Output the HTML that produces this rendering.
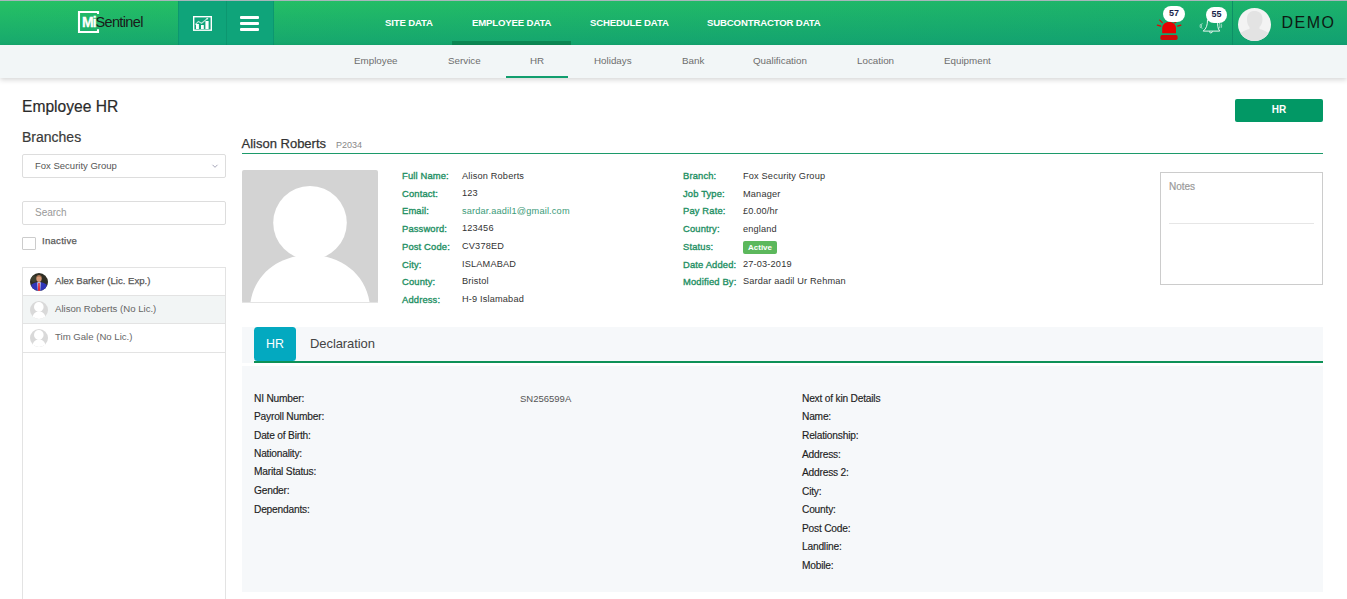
<!DOCTYPE html>
<html><head><meta charset="utf-8">
<style>
*{box-sizing:border-box;margin:0;padding:0}
html,body{width:1347px;height:599px;overflow:hidden;background:#fff;font-family:"Liberation Sans",sans-serif;color:#333}
.a{position:absolute;white-space:nowrap}
#top{position:absolute;left:0;top:0;width:1347px;height:1px;background:#a8b6bb}
#hdr{position:absolute;left:0;top:1px;width:1347px;height:44px;background:linear-gradient(to bottom,rgba(2,134,122,0) 0%,rgba(2,134,122,0.42) 100%),linear-gradient(to right,#26c164,#1cb26b)}
#blk{position:absolute;left:178px;top:1px;width:96px;height:44px;background:#0fa47a}
#blk .d1{position:absolute;left:48px;top:0;width:1px;height:44px;background:#0c9770}
#blk .d0{position:absolute;left:0;top:0;width:1px;height:44px;background:#0c9770}
#blk .d2{position:absolute;left:95px;top:0;width:1px;height:44px;background:#0c9770}
.nav{position:absolute;top:16.9px;font-size:9.6px;font-weight:bold;color:#fff;letter-spacing:-0.15px}
#navul{position:absolute;left:452px;top:41px;width:119px;height:4px;background:#0c8753}
#sub{position:absolute;left:0;top:45px;width:1347px;height:33px;background:#f2f6f7;box-shadow:0 2px 5px rgba(0,0,0,0.16)}
.sn{position:absolute;top:54.6px;font-size:9.8px;color:#6e6e6e}
#subul{position:absolute;left:506px;top:76px;width:62px;height:2px;background:#119e6e}
.dl{position:absolute;white-space:nowrap;font-size:9.4px;line-height:1;color:#1f9064;-webkit-text-stroke:0.35px #1f9064;letter-spacing:0.15px;margin-top:0.7px}
.dv{position:absolute;white-space:nowrap;font-size:9.2px;line-height:1;color:#333;letter-spacing:0.17px;margin-top:1.5px}
.em{color:#3a9a78}
.hl{position:absolute;white-space:nowrap;font-size:10.2px;letter-spacing:-0.2px;line-height:1;color:#1e1e1e;margin-top:0.4px;-webkit-text-stroke:0.15px #1e1e1e}
</style></head><body>
<div id="top"></div>
<div id="hdr"></div>
<div id="blk"><div class="d0"></div><div class="d1"></div><div class="d2"></div></div>
<!-- logo -->
<svg class="a" style="left:76px;top:9px" width="30" height="27" viewBox="0 0 30 27">
  <path d="M22 5 V3 H3 V23 H22 V20.3" fill="none" stroke="#fff" stroke-width="2.1"/>
</svg>
<div class="a" style="left:82px;top:14px;font-size:14px;font-weight:bold;color:#fff;letter-spacing:-0.8px;-webkit-text-stroke:0.3px #fff">Mi</div>
<div class="a" style="left:95.5px;top:14px;font-size:14.5px;color:#1a1a1a;letter-spacing:-0.65px">Sentinel</div>
<!-- chart icon -->
<svg class="a" style="left:192px;top:15px" width="22" height="18" viewBox="0 0 22 18">
  <rect x="1.7" y="1.7" width="17.6" height="13.5" fill="none" stroke="#fff" stroke-width="1.4"/>
  <path d="M4 14 V8.9 H6.9 V14 Z M9 14 V10.1 H11.8 V14 Z M13.4 14 V6.1 H16.6 V14 Z" fill="#fff"/>
  <path d="M3.3 9.6 L6.4 6.4 L9.6 8.2 L15.2 3.6" fill="none" stroke="#fff" stroke-opacity="0.7" stroke-width="1.2"/>
  <circle cx="15.3" cy="3.6" r="0.9" fill="#fff" fill-opacity="0.8"/>
</svg>
<!-- hamburger -->
<div class="a" style="left:240px;top:16px;width:19px;height:3px;background:#fff;border-radius:1px"></div>
<div class="a" style="left:240px;top:22px;width:19px;height:3px;background:#fff;border-radius:1px"></div>
<div class="a" style="left:240px;top:28px;width:19px;height:3px;background:#fff;border-radius:1px"></div>

<div class="nav" style="left:385px">SITE DATA</div>
<div class="nav" style="left:472px">EMPLOYEE DATA</div>
<div class="nav" style="left:590px">SCHEDULE DATA</div>
<div class="nav" style="left:707px">SUBCONTRACTOR DATA</div>
<div id="navul"></div>

<div id="sub"></div>
<div class="sn" style="left:354px">Employee</div>
<div class="sn" style="left:448px">Service</div>
<div class="sn" style="left:530px">HR</div>
<div class="sn" style="left:594px">Holidays</div>
<div class="sn" style="left:682px">Bank</div>
<div class="sn" style="left:753px">Qualification</div>
<div class="sn" style="left:857px">Location</div>
<div class="sn" style="left:944px">Equipment</div>
<div id="subul"></div>


<!-- right header -->
<svg class="a" style="left:1156px;top:18px" width="27" height="23" viewBox="0 0 27 23">
  <path d="M6.2 15.2 V10.5 C6.2 6.5 9 4 13.1 4 C17.2 4 20 6.5 20 10.5 V15.2 Z" fill="#e80000"/>
  <rect x="4.4" y="17.1" width="17.2" height="4.8" rx="1.6" fill="#d00a0a"/>
  <path d="M3.7 2.2 L6.3 4.6 M1.3 7.1 L4.8 8.1 M21.6 8.1 L24.9 7.1 M20.8 3.2 L18.7 5" stroke="#e80000" stroke-width="1.1" stroke-linecap="round"/>
</svg>
<div class="a" style="left:1163px;top:6px;width:22px;height:15.5px;background:#fff;border-radius:8px;font-size:9px;font-weight:bold;color:#1a1f4a;text-align:center;line-height:15px">57</div>
<svg class="a" style="left:1198px;top:17px" width="26" height="19" viewBox="0 0 26 19">
  <path d="M9.5 2.5 C9.5 8 8.5 11.5 5.2 14.1 H21.7 C19.6 11.5 19.5 8 19.5 2.5" fill="none" stroke="#fff" stroke-width="0.9"/>
  <path d="M11 14.6 Q12.9 17.6 14.8 14.6" fill="none" stroke="#fff" stroke-width="0.9"/>
  <path d="M4.3 6.2 C3 8 3 10 4.3 11.8 M2.6 7 C1.9 8.5 1.9 9.6 2.6 11 M21.2 5.8 C22.2 7.6 22.2 9.6 21.2 11.4 M23.1 6.6 C23.8 8 23.8 9.5 23.1 10.9" fill="none" stroke="#fff" stroke-width="0.7" stroke-opacity="0.8"/>
</svg>
<div class="a" style="left:1206px;top:7px;width:21px;height:15.5px;background:#fff;border-radius:8px;font-size:9px;font-weight:bold;color:#1a1f4a;text-align:center;line-height:15px">55</div>
<div class="a" style="left:1232px;top:1px;width:1px;height:44px;background:#0d8f66"></div>
<svg class="a" style="left:1238px;top:7.5px" width="33" height="33" viewBox="0 0 33 33">
  <defs><clipPath id="cc"><circle cx="16.5" cy="16.5" r="16.5"/></clipPath></defs>
  <circle cx="16.5" cy="16.5" r="16.5" fill="#f3f3f3"/>
  <g clip-path="url(#cc)" fill="#e3e3e3">
    <path d="M9 11 C9 5.5 12 3 16.5 3 C21 3 24.5 5.5 24.5 11 C24.5 15 23 17.5 21.5 19 L21.5 21 C25 22 29 23.5 33 27 L33 33 L0 33 L0 27 C4 23.5 8 22 11.5 21 L11.5 19 C10 17.5 9 15 9 11 Z"/>
  </g>
</svg>
<div class="a" style="left:1281.5px;top:13.9px;font-size:16px;color:#0d1a12;letter-spacing:1.5px">DEMO</div>

<!-- left column -->
<div class="a" style="left:22px;top:97.6px;font-size:15.6px;color:#2b2b2b;-webkit-text-stroke:0.2px #2b2b2b">Employee HR</div>
<div class="a" style="left:22px;top:129px;font-size:14px;color:#3a3a3a;-webkit-text-stroke:0.2px #3a3a3a">Branches</div>
<div class="a" style="left:22px;top:154px;width:204px;height:24px;border:1px solid #ddd;border-radius:2px;background:#fff"></div>
<div class="a" style="left:35px;top:159.6px;font-size:9.5px;color:#555">Fox Security Group</div>
<svg class="a" style="left:211px;top:163px" width="8" height="6" viewBox="0 0 8 6"><path d="M1.5 1.8 L4 4.3 L6.5 1.8" fill="none" stroke="#9b9bb0" stroke-width="0.9"/></svg>
<div class="a" style="left:22px;top:201px;width:204px;height:24px;border:1px solid #ddd;border-radius:2px;background:#fff"></div>
<div class="a" style="left:35px;top:207px;font-size:10px;color:#999">Search</div>
<div class="a" style="left:22px;top:237px;width:14px;height:13px;border:1px solid #ccc;border-radius:1px;background:#fff"></div>
<div class="a" style="left:42px;top:235px;font-size:9.6px;color:#585858;-webkit-text-stroke:0.25px #585858;letter-spacing:0.25px">Inactive</div>

<div class="a" style="left:22px;top:267px;width:204px;height:340px;border:1px solid #e3e3e3;background:#fff"></div>
<div class="a" style="left:23px;top:295px;width:202px;height:1px;background:#e3e3e3"></div>
<div class="a" style="left:23px;top:296px;width:202px;height:27px;background:#f2f5f5"></div>
<div class="a" style="left:23px;top:323px;width:202px;height:1px;background:#e3e3e3"></div>
<div class="a" style="left:23px;top:352px;width:202px;height:1px;background:#e3e3e3"></div>

<svg class="a" style="left:30px;top:272.5px" width="18" height="18" viewBox="0 0 18 18">
  <defs><clipPath id="c1"><circle cx="9" cy="9" r="9"/></clipPath></defs>
  <g clip-path="url(#c1)">
    <rect x="0" y="0" width="18" height="18" fill="#2f2e24"/>
    <circle cx="4" cy="6" r="3" fill="#3d4030" />
    <ellipse cx="9" cy="5.6" rx="2.7" ry="3.4" fill="#d69a78"/>
    <path d="M6.2 4.5 C6.2 1.8 11.8 1.8 11.8 4.5 C11 3 7 3 6.2 4.5 Z" fill="#9a6440"/>
    <path d="M0.5 18 L1.5 11.5 C3.5 9.8 6 9.2 9 9.2 C12 9.2 14.5 9.8 16.5 11.5 L17.5 18 Z" fill="#3036b8"/>
    <path d="M7.3 9.2 L10.7 9.2 L10.2 18 L7.8 18 Z" fill="#e6e6ee"/>
    <path d="M8.3 10 L9.7 10 L10 18 L8 18 Z" fill="#e01e2e"/>
  </g>
</svg>
<div class="a" style="left:55px;top:274.9px;font-size:9.6px;color:#585858;-webkit-text-stroke:0.25px #585858">Alex Barker (Lic. Exp.)</div>
<svg class="a" style="left:30px;top:301px" width="18" height="18" viewBox="0 0 18 18">
  <defs><clipPath id="c2"><circle cx="9" cy="9" r="9"/></clipPath></defs>
  <circle cx="9" cy="9" r="9" fill="#d9d9d9"/>
  <g clip-path="url(#c2)" fill="#fff"><circle cx="8.8" cy="5.9" r="4.8"/><path d="M2.3 17 C3 12.5 6 10.3 9 10.3 C12 10.3 15 12.5 15.7 17 Q9 19 2.3 17 Z"/></g>
</svg>
<div class="a" style="left:55px;top:302.9px;font-size:9.6px;color:#666">Alison Roberts (No Lic.)</div>
<svg class="a" style="left:30px;top:329px" width="18" height="18" viewBox="0 0 18 18">
  <defs><clipPath id="c3"><circle cx="9" cy="9" r="9"/></clipPath></defs>
  <circle cx="9" cy="9" r="9" fill="#d9d9d9"/>
  <g clip-path="url(#c3)" fill="#fff"><circle cx="8.8" cy="5.9" r="4.8"/><path d="M2.3 17 C3 12.5 6 10.3 9 10.3 C12 10.3 15 12.5 15.7 17 Q9 19 2.3 17 Z"/></g>
</svg>
<div class="a" style="left:55px;top:330.9px;font-size:9.6px;color:#666">Tim Gale (No Lic.)</div>

<!-- HR button -->
<div class="a" style="left:1235px;top:99px;width:88px;height:23px;background:#029865;border-radius:2px;color:#fff;font-size:10px;font-weight:bold;text-align:center;line-height:22px">HR</div>

<!-- profile header -->
<div class="a" style="left:241.5px;top:136px;font-size:13px;color:#333;-webkit-text-stroke:0.25px #333">Alison Roberts</div>
<div class="a" style="left:336px;top:140px;font-size:9px;color:#888">P2034</div>
<div class="a" style="left:242px;top:152.5px;width:1081px;height:1.5px;background:#1c9a6a"></div>

<svg class="a" style="left:242px;top:170px" width="136" height="133" viewBox="0 0 136 133">
  <rect width="136" height="133" rx="2" fill="#d3d3d3"/>
  <circle cx="68" cy="52.8" r="36.8" fill="#fff"/>
  <path d="M8.5 132 C13 103 38 85 68 85 C98 85 123 103 127.5 132 Z" fill="#fff"/>
  <rect x="0" y="132" width="136" height="1" fill="#e4e4e4"/>
</svg>

<div class="dl" style="left:402px;top:170.2px">Full Name:</div>
<div class="dv" style="left:462px;top:170.2px">Alison Roberts</div>
<div class="dl" style="left:402px;top:187.9px">Contact:</div>
<div class="dv" style="left:462px;top:187.9px">123</div>
<div class="dl" style="left:402px;top:205.2px">Email:</div>
<div class="dv em" style="left:462px;top:205.2px">sardar.aadil1@gmail.com</div>
<div class="dl" style="left:402px;top:222.9px">Password:</div>
<div class="dv" style="left:462px;top:222.9px">123456</div>
<div class="dl" style="left:402px;top:240.9px">Post Code:</div>
<div class="dv" style="left:462px;top:240.9px">CV378ED</div>
<div class="dl" style="left:402px;top:258.9px">City:</div>
<div class="dv" style="left:462px;top:258.9px">ISLAMABAD</div>
<div class="dl" style="left:402px;top:275.9px">County:</div>
<div class="dv" style="left:462px;top:275.9px">Bristol</div>
<div class="dl" style="left:402px;top:293.9px">Address:</div>
<div class="dv" style="left:462px;top:293.9px">H-9 Islamabad</div>
<div class="dl" style="left:683px;top:170.3px">Branch:</div>
<div class="dv" style="left:743px;top:170.3px">Fox Security Group</div>
<div class="dl" style="left:683px;top:188.0px">Job Type:</div>
<div class="dv" style="left:743px;top:188.0px">Manager</div>
<div class="dl" style="left:683px;top:205.2px">Pay Rate:</div>
<div class="dv" style="left:743px;top:205.2px">£0.00/hr</div>
<div class="dl" style="left:683px;top:223.3px">Country:</div>
<div class="dv" style="left:743px;top:223.3px">england</div>
<div class="dl" style="left:683px;top:241.0px">Status:</div>
<div class="dl" style="left:683px;top:258.9px">Date Added:</div>
<div class="dv" style="left:743px;top:258.9px">27-03-2019</div>
<div class="dl" style="left:683px;top:275.9px">Modified By:</div>
<div class="dv" style="left:743px;top:275.9px">Sardar aadil Ur Rehman</div>
<div class="a" style="left:743px;top:241px;width:34px;height:13px;background:#5cb85c;border-radius:2px;color:#fff;font-size:8px;font-weight:bold;text-align:center;line-height:13px">Active</div>

<!-- notes -->
<div class="a" style="left:1160px;top:172px;width:163px;height:113px;border:1px solid #ccc;background:#fff"></div>
<div class="a" style="left:1169px;top:181px;font-size:10px;color:#9a9a9a;-webkit-text-stroke:0.2px #9a9a9a">Notes</div>
<div class="a" style="left:1169px;top:223px;width:145px;height:1px;background:#e6e6e6"></div>

<!-- tabs panel -->
<div class="a" style="left:242px;top:327px;width:1081px;height:36px;background:#f6f8fa"></div>
<div class="a" style="left:254px;top:327px;width:42px;height:34px;background:#03a9c0;border-radius:3.5px;color:#fff;font-size:12.4px;text-align:center;line-height:34px">HR</div>
<div class="a" style="left:310px;top:335.5px;font-size:13px;color:#444;letter-spacing:-0.08px">Declaration</div>
<div class="a" style="left:254px;top:361px;width:1069px;height:2px;background:#0e9157"></div>
<div class="a" style="left:242px;top:366px;width:1081px;height:226px;background:#f6f8fa"></div>

<div class="hl" style="left:254px;top:393.6px">NI Number:</div>
<div class="hl" style="left:254px;top:412.1px">Payroll Number:</div>
<div class="hl" style="left:254px;top:430.6px">Date of Birth:</div>
<div class="hl" style="left:254px;top:449.1px">Nationality:</div>
<div class="hl" style="left:254px;top:467.1px">Marital Status:</div>
<div class="hl" style="left:254px;top:486.1px">Gender:</div>
<div class="hl" style="left:254px;top:504.2px">Dependants:</div>
<div class="a" style="left:520px;top:393.1px;font-size:9.5px;color:#555">SN256599A</div>
<div class="hl" style="left:802px;top:393.9px">Next of kin Details</div>
<div class="hl" style="left:802px;top:412.0px">Name:</div>
<div class="hl" style="left:802px;top:430.9px">Relationship:</div>
<div class="hl" style="left:802px;top:449.9px">Address:</div>
<div class="hl" style="left:802px;top:468.0px">Address 2:</div>
<div class="hl" style="left:802px;top:486.9px">City:</div>
<div class="hl" style="left:802px;top:505.0px">County:</div>
<div class="hl" style="left:802px;top:524.1px">Post Code:</div>
<div class="hl" style="left:802px;top:542.1px">Landline:</div>
<div class="hl" style="left:802px;top:560.7px">Mobile:</div>
</body></html>
